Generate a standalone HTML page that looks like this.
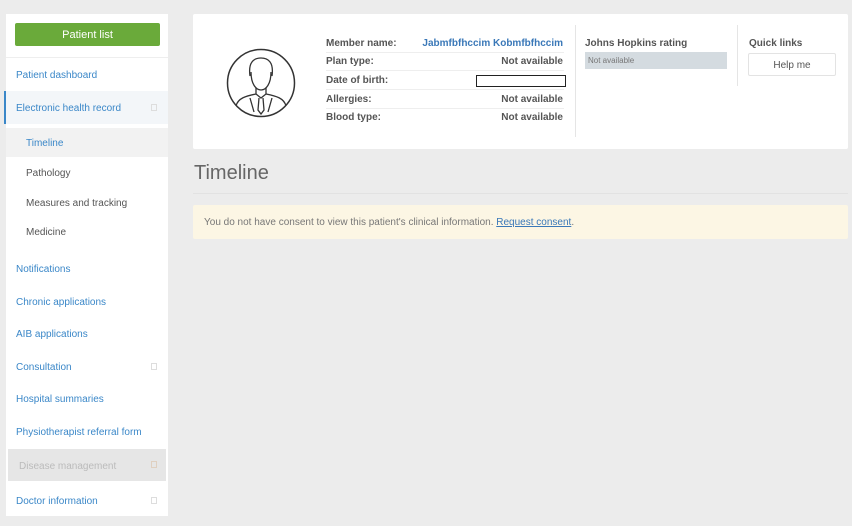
<!DOCTYPE html>
<html><head><style>
*{margin:0;padding:0;box-sizing:border-box}
body{width:852px;height:526px;background:#ececec;font-family:"Liberation Sans",sans-serif;position:relative;overflow:hidden}
.abs{position:absolute}
.side{left:6px;top:14px;width:162px;height:502px;background:#fff}
.btn{left:15px;top:23px;width:145px;height:23px;background:#6aaa3a;border-radius:2px;color:#fff;font-size:11px;text-align:center;line-height:24px}
.it{position:absolute;left:16px;font-size:10px;color:#3a87c8;line-height:12px;margin-top:1px}
.sub{position:absolute;left:26px;font-size:10px;color:#555;line-height:12px;margin-top:1px}
.sq{position:absolute;left:151px;width:6px;height:7px;border:1px solid #ddd}
.card{left:193px;top:14px;width:655px;height:135px;background:#fff;border-radius:2px}
.lab{position:absolute;left:326px;font-size:10px;font-weight:bold;color:#555;line-height:12px;margin-top:1px}
.val{position:absolute;right:289px;font-size:10px;font-weight:bold;color:#555;line-height:12px;text-align:right;margin-top:1px}
.sep{position:absolute;left:326px;width:238px;height:1px;background:#eee}
</style></head><body>
<div class="abs side"></div>
<div class="abs btn">Patient list</div>
<div class="abs" style="left:6px;top:57px;width:162px;height:1px;background:#eee"></div>
<div class="it" style="top:69px">Patient dashboard</div>
<div class="abs" style="left:6px;top:91px;width:162px;height:33px;background:#f3f6f9"></div>
<div class="abs" style="left:4px;top:91px;width:2px;height:33px;background:#3a87c8"></div>
<div class="it" style="top:102px">Electronic health record</div>
<div class="sq" style="top:104px"></div>
<div class="abs" style="left:6px;top:128px;width:162px;height:29px;background:#f2f2f2"></div>
<div class="sub" style="top:137px;color:#3a87c8">Timeline</div>
<div class="sub" style="top:167px">Pathology</div>
<div class="sub" style="top:197px">Measures and tracking</div>
<div class="sub" style="top:226px">Medicine</div>
<div class="it" style="top:263px">Notifications</div>
<div class="it" style="top:296px">Chronic applications</div>
<div class="it" style="top:328px">AIB applications</div>
<div class="it" style="top:361px">Consultation</div>
<div class="sq" style="top:363px"></div>
<div class="it" style="top:393px">Hospital summaries</div>
<div class="it" style="top:426px">Physiotherapist referral form</div>
<div class="abs" style="left:8px;top:449px;width:158px;height:32px;background:#e6e6e6"></div>
<div class="it" style="top:460px;left:19px;color:#bbb">Disease management</div>
<div class="sq" style="top:461px;border-color:#e0d0c0"></div>
<div class="it" style="top:495px">Doctor information</div>
<div class="sq" style="top:497px"></div>

<div class="abs card"></div>
<svg class="abs" style="left:226px;top:48px" width="70" height="70" viewBox="0 0 70 70">
<circle cx="35" cy="35" r="33.5" fill="none" stroke="#333" stroke-width="1.5"/>
<path d="M24 28 C22 14 28 10 35 10 C42 10 48 14 46 28" fill="none" stroke="#333" stroke-width="1.3"/>
<path d="M25 24 C25 36 30 42 35 42 C40 42 45 36 45 24" fill="none" stroke="#333" stroke-width="1.3"/>
<path d="M30 40 L30 46 L35 50 L40 46 L40 40" fill="none" stroke="#333" stroke-width="1.3"/>
<path d="M10 58 C12 50 20 48 30 46 M60 58 C58 50 50 48 40 46 M33 50 L32 62 L35 66 L38 62 L37 50 M24 50 L28 64 M46 50 L42 64" fill="none" stroke="#333" stroke-width="1.3"/>
</svg>
<div class="lab" style="top:37px">Member name:</div><div class="val" style="top:37px;color:#3a78b8">Jabmfbfhccim Kobmfbfhccim</div>
<div class="sep" style="top:52px"></div>
<div class="lab" style="top:55px">Plan type:</div><div class="val" style="top:55px">Not available</div>
<div class="sep" style="top:70px"></div>
<div class="lab" style="top:74px">Date of birth:</div>
<div class="abs" style="left:476px;top:75px;width:90px;height:12px;border:1px solid #222;background:#fff"></div>
<div class="sep" style="top:89px"></div>
<div class="lab" style="top:93px">Allergies:</div><div class="val" style="top:93px">Not available</div>
<div class="sep" style="top:108px"></div>
<div class="lab" style="top:111px">Blood type:</div><div class="val" style="top:111px">Not available</div>
<div class="abs" style="left:575px;top:25px;width:1px;height:112px;background:#e5e5e5"></div>
<div class="lab" style="left:585px;top:37px">Johns Hopkins rating</div>
<div class="abs" style="left:585px;top:52px;width:142px;height:17px;background:#d4dbe0;font-size:8px;color:#777;padding:4px 3px">Not available</div>
<div class="abs" style="left:737px;top:25px;width:1px;height:61px;background:#e5e5e5"></div>
<div class="lab" style="left:749px;top:37px">Quick links</div>
<div class="abs" style="left:748px;top:53px;width:88px;height:23px;border:1px solid #e3e3e3;border-radius:2px;font-size:10px;color:#555;text-align:center;line-height:23px">Help me</div>

<div class="abs" style="left:194px;top:162px;font-size:20px;color:#666">Timeline</div>
<div class="abs" style="left:193px;top:193px;width:655px;height:1px;background:#e2e2e2"></div>
<div class="abs" style="left:193px;top:205px;width:655px;height:34px;background:#fcf6e4;border-radius:2px;font-size:10px;color:#777;padding:12px 11px;line-height:12px">You do not have consent to view this patient's clinical information. <span style="color:#3a78b8;text-decoration:underline">Request consent</span>.</div>
</body></html>
